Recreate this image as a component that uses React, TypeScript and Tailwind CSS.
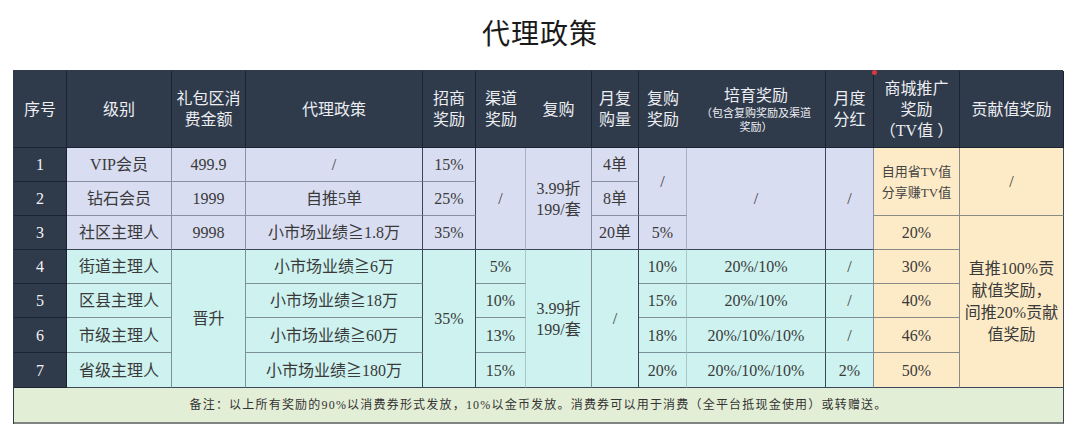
import React from "react";

const base =
  "flex items-center justify-center text-center border-r border-b leading-[21px]";
const hd = `${base} bg-[#2f3a4b] text-[#eceef2] border-[#1b2230] text-[16px]`;
const idx = `${base} bg-[#2f3a4b] text-[#f2f3f5] border-[#1b2230] text-[16px]`;
const lav = `${base} bg-[#d9ddf1] border-[#8790a6]`;
const cy = `${base} bg-[#cdf2ef] border-[#7d8f98]`;
const ye = `${base} bg-[#fdebc7] border-[#8a8a86]`;

export default function App() {
  return (
    <div
      className="w-[1080px] h-[442px] bg-white text-[#3a3a3a]"
      style={{ fontFamily: '"Liberation Serif", "Noto Sans CJK SC", serif' }}
    >
      {/* Title */}
      <div className="h-[70px] flex items-center justify-center">
        <h1 className="text-[28px] font-normal text-[#1a1a1a] tracking-[1px]">代理政策</h1>
      </div>

      <div className="ml-[13px] w-[1050px] border-l border-t border-[#2f3a4b] grid grid-cols-[53px_105px_74px_177px_53px_50px_66px_47px_48px_139px_48px_86px_104px] grid-rows-[77px_34px_34px_34px_34px_34px_35px_35px_36px] text-[16px]">
        {/* Header */}
        <div className={`${hd} col-start-1 row-start-1`}>序号</div>
        <div className={`${hd} col-start-2 row-start-1`}>级别</div>
        <div className={`${hd} col-start-3 row-start-1`}>礼包区消<br />费金额</div>
        <div className={`${hd} col-start-4 row-start-1`}>代理政策</div>
        <div className={`${hd} col-start-5 row-start-1`}>招商<br />奖励</div>
        <div className={`${hd} col-start-6 row-start-1 border-r-0`}>渠道<br />奖励</div>
        <div className={`${hd} col-start-7 row-start-1`}>复购</div>
        <div className={`${hd} col-start-8 row-start-1`}>月复<br />购量</div>
        <div className={`${hd} col-start-9 row-start-1 border-r-0`}>复购<br />奖励</div>
        <div className={`${hd} col-start-10 row-start-1 flex-col`}>
          <span>培育奖励</span>
          <span className="text-[11px] leading-[14px]">（包含复购奖励及渠道<br />奖励）</span>
        </div>
        <div className={`${hd} col-start-11 row-start-1`}>月度<br />分红</div>
        <div className={`${hd} col-start-12 row-start-1 relative`}>
          <span className="absolute -left-[2px] -top-[1px] w-[5px] h-[5px] rounded-full bg-[#d63a3a]" />
          商城推广<br />奖励<br />（TV值 ）
        </div>
        <div className={`${hd} col-start-13 row-start-1`}>贡献值奖励</div>

        {/* 序号 */}
        <div className={`${idx} col-start-1 row-start-2`}>1</div>
        <div className={`${idx} col-start-1 row-start-3`}>2</div>
        <div className={`${idx} col-start-1 row-start-4`}>3</div>
        <div className={`${idx} col-start-1 row-start-5`}>4</div>
        <div className={`${idx} col-start-1 row-start-6`}>5</div>
        <div className={`${idx} col-start-1 row-start-7`}>6</div>
        <div className={`${idx} col-start-1 row-start-8`}>7</div>

        {/* 级别 */}
        <div className={`${lav} col-start-2 row-start-2`}>VIP会员</div>
        <div className={`${lav} col-start-2 row-start-3`}>钻石会员</div>
        <div className={`${lav} col-start-2 row-start-4 border-b-[#3d4656]`}>社区主理人</div>
        <div className={`${cy} col-start-2 row-start-5`}>街道主理人</div>
        <div className={`${cy} col-start-2 row-start-6`}>区县主理人</div>
        <div className={`${cy} col-start-2 row-start-7`}>市级主理人</div>
        <div className={`${cy} col-start-2 row-start-8 border-b-[#3d4656]`}>省级主理人</div>

        {/* 礼包区消费金额 */}
        <div className={`${lav} col-start-3 row-start-2`}>499.9</div>
        <div className={`${lav} col-start-3 row-start-3`}>1999</div>
        <div className={`${lav} col-start-3 row-start-4 border-b-[#3d4656]`}>9998</div>
        <div className={`${cy} col-start-3 row-start-5 row-span-4 border-b-[#3d4656]`}>晋升</div>

        {/* 代理政策 */}
        <div className={`${lav} col-start-4 row-start-2 border-r-[#3d4656]`}>/</div>
        <div className={`${lav} col-start-4 row-start-3 border-r-[#3d4656]`}>自推5单</div>
        <div className={`${lav} col-start-4 row-start-4 border-r-[#3d4656] border-b-[#3d4656]`}>小市场业绩≧1.8万</div>
        <div className={`${cy} col-start-4 row-start-5 border-r-[#3d4656]`}>小市场业绩≧6万</div>
        <div className={`${cy} col-start-4 row-start-6 border-r-[#3d4656]`}>小市场业绩≧18万</div>
        <div className={`${cy} col-start-4 row-start-7 border-r-[#3d4656]`}>小市场业绩≧60万</div>
        <div className={`${cy} col-start-4 row-start-8 border-r-[#3d4656] border-b-[#3d4656]`}>小市场业绩≧180万</div>

        {/* 招商奖励 */}
        <div className={`${lav} col-start-5 row-start-2 border-r-[#3d4656]`}>15%</div>
        <div className={`${lav} col-start-5 row-start-3 border-r-[#3d4656]`}>25%</div>
        <div className={`${lav} col-start-5 row-start-4 border-r-[#3d4656] border-b-[#3d4656]`}>35%</div>
        <div className={`${cy} col-start-5 row-start-5 row-span-4 border-r-[#3d4656] border-b-[#3d4656]`}>35%</div>

        {/* 渠道奖励 */}
        <div className={`${lav} col-start-6 row-start-2 row-span-3 border-r-[#a9b0c4] border-b-[#3d4656]`}>/</div>
        <div className={`${cy} col-start-6 row-start-5 border-r-[#a7c6c8]`}>5%</div>
        <div className={`${cy} col-start-6 row-start-6 border-r-[#a7c6c8]`}>10%</div>
        <div className={`${cy} col-start-6 row-start-7 border-r-[#a7c6c8]`}>13%</div>
        <div className={`${cy} col-start-6 row-start-8 border-r-[#a7c6c8] border-b-[#3d4656]`}>15%</div>

        {/* 复购 */}
        <div className={`${lav} col-start-7 row-start-2 row-span-3 border-b-[#3d4656]`}>3.99折<br />199/套</div>
        <div className={`${cy} col-start-7 row-start-5 row-span-4 border-b-[#3d4656]`}>3.99折<br />199/套</div>

        {/* 月复购量 */}
        <div className={`${lav} col-start-8 row-start-2 border-r-[#3d4656]`}>4单</div>
        <div className={`${lav} col-start-8 row-start-3 border-r-[#3d4656]`}>8单</div>
        <div className={`${lav} col-start-8 row-start-4 border-r-[#3d4656] border-b-[#3d4656]`}>20单</div>
        <div className={`${cy} col-start-8 row-start-5 row-span-4 border-r-[#3d4656] border-b-[#3d4656]`}>/</div>

        {/* 复购奖励 */}
        <div className={`${lav} col-start-9 row-start-2 row-span-2 border-r-[#a9b0c4]`}>/</div>
        <div className={`${lav} col-start-9 row-start-4 border-r-[#a9b0c4] border-b-[#3d4656]`}>5%</div>
        <div className={`${cy} col-start-9 row-start-5 border-r-[#a7c6c8]`}>10%</div>
        <div className={`${cy} col-start-9 row-start-6 border-r-[#a7c6c8]`}>15%</div>
        <div className={`${cy} col-start-9 row-start-7 border-r-[#a7c6c8]`}>18%</div>
        <div className={`${cy} col-start-9 row-start-8 border-r-[#a7c6c8] border-b-[#3d4656]`}>20%</div>

        {/* 培育奖励 */}
        <div className={`${lav} col-start-10 row-start-2 row-span-3 border-r-[#3d4656] border-b-[#3d4656]`}>/</div>
        <div className={`${cy} col-start-10 row-start-5 border-r-[#3d4656]`}>20%/10%</div>
        <div className={`${cy} col-start-10 row-start-6 border-r-[#3d4656]`}>20%/10%</div>
        <div className={`${cy} col-start-10 row-start-7 border-r-[#3d4656]`}>20%/10%/10%</div>
        <div className={`${cy} col-start-10 row-start-8 border-r-[#3d4656] border-b-[#3d4656]`}>20%/10%/10%</div>

        {/* 月度分红 */}
        <div className={`${lav} col-start-11 row-start-2 row-span-3 border-b-[#3d4656]`}>/</div>
        <div className={`${cy} col-start-11 row-start-5`}>/</div>
        <div className={`${cy} col-start-11 row-start-6`}>/</div>
        <div className={`${cy} col-start-11 row-start-7`}>/</div>
        <div className={`${cy} col-start-11 row-start-8 border-b-[#3d4656]`}>2%</div>

        {/* 商城推广奖励 */}
        <div className={`${ye} col-start-12 row-start-2 row-span-2 text-[13px] leading-[18px] text-[#444]`}>
          自用省TV值<br />分享赚TV值
        </div>
        <div className={`${ye} col-start-12 row-start-4`}>20%</div>
        <div className={`${ye} col-start-12 row-start-5`}>30%</div>
        <div className={`${ye} col-start-12 row-start-6`}>40%</div>
        <div className={`${ye} col-start-12 row-start-7`}>46%</div>
        <div className={`${ye} col-start-12 row-start-8 border-b-[#3d4656]`}>50%</div>

        {/* 贡献值奖励 */}
        <div className={`${ye} col-start-13 row-start-2 row-span-2 border-r-[#3d4656]`}>/</div>
        <div className={`${ye} col-start-13 row-start-4 row-span-5 border-r-[#3d4656] border-b-[#3d4656] text-[16px] leading-[22px] whitespace-nowrap`}>
          直推100%贡<br />献值奖励，<br />间推20%贡献<br />值奖励
        </div>

        {/* 备注 */}
        <div className="col-start-1 col-span-13 row-start-9 flex items-center justify-center bg-[#e3eed6] border-r border-b-2 border-r-[#3d4656] border-b-[#7f8480] text-[12px] text-[#333] tracking-[1.2px]">
          备注：以上所有奖励的90%以消费券形式发放，10%以金币发放。消费券可以用于消费（全平台抵现金使用）或转赠送。
        </div>
      </div>
    </div>
  );
}
